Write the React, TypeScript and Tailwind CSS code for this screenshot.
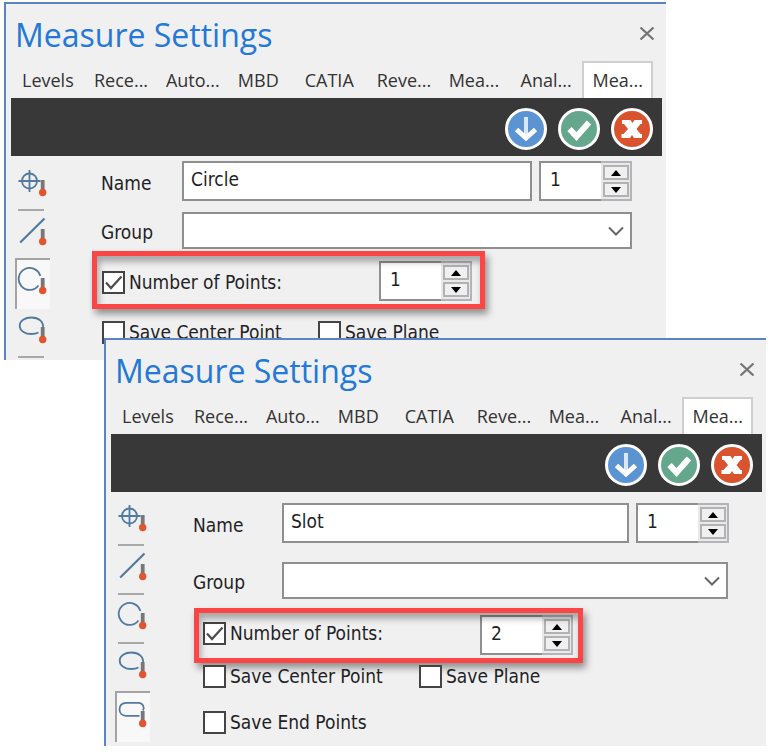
import React from "react";

const TABS = ["Levels", "Rece...", "Auto...", "MBD", "CATIA", "Reve...", "Mea...", "Anal...", "Mea..."];

type Tool = "point" | "line" | "circle" | "ellipse" | "slot";

const SHAPES: Record<Tool, React.ReactNode> = {
  point: (
    <>
      <circle cx="12.5" cy="15" r="7.5" />
      <path d="M1.500 15h22M12.500 4v22" />
    </>
  ),
  line: <path d="M3.2 27.5L27.5 3.5" strokeWidth="2.2" />,
  circle: <path d="M23.3 12A11 11 0 1 0 21.5 21.5" />,
  ellipse: <path d="M26 15.500C27 8.500 21.500 4.500 14.500 4.500C7.800 4.500 2.700 8 2.700 12.700C2.700 17.500 7.800 21 14.500 21C17.300 21 19.500 20.500 21.500 19.500" />,
  slot: <path d="M26 13.500C28 10 25.500 5.800 21.500 5.800H9C5 5.800 2.500 8.800 2.500 12.300C2.500 16 5 18.800 9 18.800H22.500" />,
};

function ToolButton({ tool, active }: { tool: Tool; active: boolean }) {
  return (
    <button
      type="button"
      aria-label={tool}
      aria-pressed={active}
      className={
        active
          ? "relative z-10 -mt-0.5 flex h-[51px] w-[35px] border-t-2 border-l-2 border-[#a3a3a3] bg-[#f8f8f8]"
          : "relative flex h-[49px] w-[35px] pt-1 pl-0.5 after:absolute after:bottom-0 after:left-[3px] after:h-0.5 after:w-[26px] after:bg-[#a8a8a8]"
      }
    >
      <svg width="32" height="40" viewBox="0 0 32 40" fill="none" stroke="#5279a0" strokeWidth="1.8" className={active ? "mt-1" : ""}>
        {SHAPES[tool]}
        <path d="M25.7 14v12" stroke="#777" strokeWidth="3.8" />
        <circle cx="25.7" cy="26.5" r="3.7" fill="#e0552f" stroke="none" />
      </svg>
    </button>
  );
}

function ActionButton({ label, color, children }: { label: string; color: string; children: React.ReactNode }) {
  return (
    <button type="button" aria-label={label} className="size-[42px]">
      <svg viewBox="0 0 42 42" className="size-full">
        <circle cx="21" cy="21" r="19.5" fill={color} stroke="#fff" strokeWidth="3" />
        {children}
      </svg>
    </button>
  );
}

function Spinner({ label, value }: { label: string; value: string }) {
  return (
    <div className="flex h-10 w-[93px] shrink-0">
      <input
        aria-label={label}
        defaultValue={value}
        className="w-[62px] border-2 border-r-0 border-[#8f8f8f] bg-white pb-1 pl-[9px] outline-none"
      />
      <div className="flex flex-1 flex-col gap-0.5 border-2 border-l-0 border-[#b4b4b8] bg-[#e9e9ec] px-px py-0.5 pl-0.5">
        <button type="button" aria-label={`Increase ${label}`} className="flex flex-1 items-center justify-center border-2 border-[#b2b2b2] bg-[#f0f0f0]">
          <svg width="10" height="6" viewBox="0 0 10 6"><path d="M0 6L5 0L10 6Z" /></svg>
        </button>
        <button type="button" aria-label={`Decrease ${label}`} className="flex flex-1 items-center justify-center border-2 border-[#b2b2b2] bg-[#f0f0f0]">
          <svg width="10" height="6" viewBox="0 0 10 6"><path d="M0 0L5 6L10 0Z" /></svg>
        </button>
      </div>
    </div>
  );
}

function Check({ label, checked = false, className = "" }: { label: string; checked?: boolean; className?: string }) {
  return (
    <label className={`flex items-center gap-1 whitespace-nowrap ${className}`}>
      <span className="relative size-[23px] shrink-0">
        <input type="checkbox" defaultChecked={checked} className="peer block size-full appearance-none border-2 border-[#444] bg-white" />
        <svg viewBox="0 0 23 23" fill="none" stroke="#4d4d4d" strokeWidth="2.2" className="pointer-events-none absolute inset-0 hidden peer-checked:block">
          <path d="M4 11.5L9 17L19.5 5.5" />
        </svg>
      </span>
      {label}
    </label>
  );
}

type WindowProps = {
  id: string;
  name: string;
  points: string;
  tools: Tool[];
  active: Tool;
  className: string;
  railClass: string;
  formClass: string;
  labelClass: string;
  groupClass: string;
  pointsClass: string;
  checkClass: string;
  calloutClass: string;
  savesClass: string;
  endPoints?: boolean;
};

function SettingsWindow(p: WindowProps) {
  return (
    <section className={`relative border-t-2 border-l-2 border-[#5d84bf] bg-[#f0f0f0] ${p.className}`}>
      <header className="flex h-[57px] items-center justify-between pr-3 pl-[9px]">
        <h2 className="pt-1 font-['Open_Sans','Noto_Sans',sans-serif] text-[32px] leading-10 whitespace-nowrap text-[#2478d8]">Measure Settings</h2>
        <button type="button" aria-label="Close" className="pt-0.5">
          <svg width="14" height="13" viewBox="0 0 14 13" fill="none" stroke="#757575" strokeWidth="2.2">
            <path d="M0.5 0.5L13.5 12.5M13.5 0.5L0.5 12.5" />
          </svg>
        </button>
      </header>
      <div role="tablist" className="flex h-[37px] pr-[13px] pl-[5px] font-['Open_Sans','Noto_Sans',sans-serif] text-lg leading-9 text-[#333]">
        {TABS.map((t, i) => (
          <button
            key={i}
            type="button"
            role="tab"
            aria-selected={i === 8}
            className={
              i === 8
                ? "min-w-0 flex-[69] border-2 border-b-0 border-[#cfcfcf] bg-white pb-0.5 pl-[9px] text-left leading-8 whitespace-nowrap"
                : i === 3
                  ? "min-w-0 flex-[66] pl-[11px] text-left whitespace-nowrap"
                  : "min-w-0 flex-[72] pl-[11px] text-left whitespace-nowrap"
            }
          >
            {t}
          </button>
        ))}
      </div>
      <div className="mr-1 ml-[5px] flex h-[58px] items-center justify-end gap-[11px] bg-[#383838] pt-1 pr-[9px]">
        <ActionButton label="Apply" color="#5b94d2">
          <path d="M21 9v19" stroke="#d9e7f6" strokeWidth="4" />
          <path d="M11.5 21.5L21 30L30.5 21.5" fill="none" stroke="#fff" strokeWidth="5" />
        </ActionButton>
        <ActionButton label="Accept" color="#65a78d">
          <path d="M11.5 21L18.5 28.5L31 14.5" fill="none" stroke="#fff" strokeWidth="6" />
        </ActionButton>
        <ActionButton label="Cancel" color="#d9532f">
          <path d="M11 12H19.500L21.500 15L23.500 12H31V16H29.500L25.500 21L29.500 26H31V30H23L21 27L19 30H10.500V26H12.500L17 21L13 16H11Z" fill="#fff" />
        </ActionButton>
      </div>
      <div className="flex font-['DejaVu_Sans_Condensed','DejaVu_Sans',sans-serif] text-[19px] leading-6 text-[#1f1f26]">
        <nav aria-label="Feature types" className={`w-[50px] shrink-0 pl-[9px] ${p.railClass}`}>
          {p.tools.map((t) => (
            <ToolButton key={t} tool={t} active={t === p.active} />
          ))}
        </nav>
        <form className={`min-w-0 flex-1 ${p.formClass}`}>
          <div className="flex items-center gap-[7px]">
            <div className="flex min-w-0 flex-1 items-center">
              <label htmlFor={`${p.id}-name`} className={`shrink-0 pt-1 ${p.labelClass}`}>Name</label>
              <input id={`${p.id}-name`} defaultValue={p.name} className="h-10 min-w-0 flex-1 border-2 border-[#8f8f8f] bg-white pb-1 pl-[7px] outline-none" />
            </div>
            <Spinner label="Name index" value="1" />
          </div>
          <div className={`flex items-center ${p.groupClass}`}>
            <label htmlFor={`${p.id}-group`} className={`shrink-0 pt-0.5 ${p.labelClass}`}>Group</label>
            <div className="relative min-w-0 flex-1">
              <select id={`${p.id}-group`} className="block h-[37px] w-full appearance-none border-2 border-[#8f8f8f] bg-white">
                <option />
              </select>
              <svg width="16" height="10" viewBox="0 0 16 10" fill="none" stroke="#666" strokeWidth="2" className="pointer-events-none absolute top-3.5 right-2">
                <path d="M1 1.500L8 8.500L15 1.500" />
              </svg>
            </div>
          </div>
          <div className={`relative flex w-[370px] items-center justify-between ${p.pointsClass}`}>
            <Check label="Number of Points:" checked className={p.checkClass} />
            <Spinner label="Number of points" value={p.points} />
            <div className={`pointer-events-none absolute border-5 border-[#fc4545] shadow-[3px_5px_7px_rgba(0,0,0,0.4),inset_2px_6px_6px_rgba(0,0,0,0.3)] ${p.calloutClass}`} />
          </div>
          <div className={`flex ${p.savesClass}`}>
            <div className="w-[216px]"><Check label="Save Center Point" /></div>
            <Check label="Save Plane" />
          </div>
          {p.endPoints && (
            <div className="mt-[22px] flex pl-2.5"><Check label="Save End Points" /></div>
          )}
        </form>
      </div>
    </section>
  );
}

export default function App() {
  return (
    <main className="min-h-screen bg-white pt-0.5 pr-0.5 pb-[7px] pl-1">
      <SettingsWindow
        id="circle"
        name="Circle"
        points="1"
        tools={["point", "line", "circle", "ellipse"]}
        active="circle"
        className="mr-[100px] h-[358px] overflow-hidden"
        railClass="pt-1.5"
        formClass="pt-[5px] pr-[34px] pl-[45px]"
        labelClass="w-[81px]"
        groupClass="mt-[11px]"
        pointsClass="mt-3 ml-px"
        checkClass="pt-0.5"
        calloutClass="-top-2.5 -right-[13px] -bottom-2 -left-2.5"
        savesClass="mt-[19px] pl-px"
      />
      <SettingsWindow
        id="slot"
        name="Slot"
        points="2"
        tools={["point", "line", "circle", "ellipse", "slot"]}
        active="slot"
        className="-mt-[22px] ml-[100px] pb-1"
        railClass="pt-[5px]"
        formClass="pt-[11px] pr-[37px] pl-[37px]"
        labelClass="w-[89px]"
        groupClass="mt-[19px] mr-px"
        pointsClass="mt-4 ml-2.5"
        checkClass="pb-1"
        calloutClass="-top-[7px] -right-2.5 -bottom-2 -left-[9px]"
        savesClass="mt-[9px] pl-2.5"
        endPoints
      />
    </main>
  );
}
